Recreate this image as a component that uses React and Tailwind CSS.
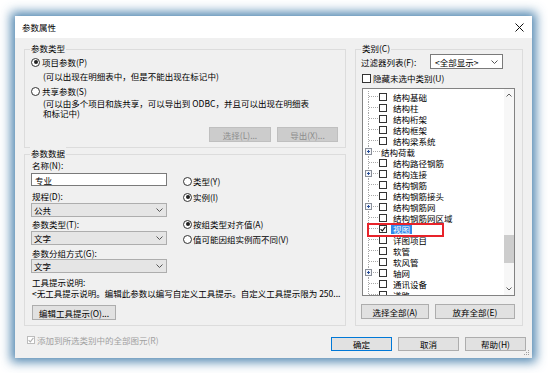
import React from "react";

function Radio({ checked }) {
  return (
    <span className="w-[9px] h-[9px] rounded-full border border-[#333333] bg-white flex items-center justify-center shrink-0">
      {checked && <span className="w-[4px] h-[4px] rounded-full bg-[#222222]" />}
    </span>
  );
}

function Check({ checked, disabled }) {
  return (
    <span
      className={`w-[8px] h-[8px] border bg-white flex items-center justify-center shrink-0 ${
        disabled ? "border-[#bcbcbc]" : "border-[#333333]"
      }`}
    >
      {checked && (
        <svg width="6" height="6" viewBox="0 0 6 6">
          <path d="M0.6 3.2 L2.3 4.9 L5.4 0.9" fill="none" stroke={disabled ? "#b0b0b0" : "#111"} strokeWidth="1.1" />
        </svg>
      )}
    </span>
  );
}

function Chevron() {
  return (
    <svg width="7" height="4" viewBox="0 0 7 4" className="shrink-0">
      <path d="M0.5 0.5 L3.5 3.5 L6.5 0.5" fill="none" stroke="#555" strokeWidth="1" />
    </svg>
  );
}

function Select({ children, className = "" }) {
  return (
    <div className={`h-[14px] bg-[#e5e5e5] border border-[#adadad] flex items-center justify-between pl-[2px] pr-[3px] ${className}`}>
      <span>{children}</span>
      <Chevron />
    </div>
  );
}

function Btn({ children, className = "" }) {
  return (
    <div className={`h-[15px] bg-[#e1e1e1] border border-[#adadad] flex items-center justify-center ${className}`}>
      {children}
    </div>
  );
}

function Group({ label, className = "", children }) {
  return (
    <div className={`relative border border-[#dcdcdc] ${className}`}>
      <span className="absolute -top-[8px] left-[5px] bg-[#f0f0f0] px-[1px] leading-[12px]">{label}</span>
      {children}
    </div>
  );
}

function TreeRow({ text, plus, cb = true, checked, selected, marked }) {
  const w = cb ? 16 : 18;
  return (
    <div className="relative flex items-center h-[11px] whitespace-nowrap">
      <svg width={w} height="11" viewBox={`0 0 ${w} 11`} className="shrink-0">
        <line x1="5.5" y1="0" x2="5.5" y2="11" stroke="#a8a8a8" strokeDasharray="1 1" />
        <line x1="6" y1="5.5" x2={w} y2="5.5" stroke="#a8a8a8" strokeDasharray="1 1" />
        {plus && (
          <g>
            <rect x="2.5" y="2.5" width="6" height="6" fill="#f4f6fa" stroke="#8a8f99" />
            <path d="M4 5.5 H7 M5.5 4 V7" stroke="#2a4f9a" strokeWidth="1" />
          </g>
        )}
      </svg>
      {cb && <Check checked={checked} />}
      {selected ? (
        <span className="ml-[4px] px-[2px] bg-[#3388ea] text-white leading-[10px]">{text}</span>
      ) : (
        <span className={cb ? "ml-[6px]" : "ml-0"}>{text}</span>
      )}
      {marked && <span className="absolute left-[4px] top-0 w-[77px] h-[14px] border-2 border-[#e8232a] z-10" />}
    </div>
  );
}

const rows = [
  { t: "结构基础" },
  { t: "结构柱" },
  { t: "结构桁架" },
  { t: "结构框架" },
  { t: "结构梁系统" },
  { t: "结构荷载", plus: true, cb: false },
  { t: "结构路径钢筋" },
  { t: "结构连接", plus: true },
  { t: "结构钢筋" },
  { t: "结构钢筋接头" },
  { t: "结构钢筋网", plus: true },
  { t: "结构钢筋网区域" },
  { t: "视图", checked: true, selected: true, marked: true },
  { t: "详图项目" },
  { t: "软管" },
  { t: "软风管" },
  { t: "轴网", plus: true },
  { t: "通讯设备" },
  { t: "道路" },
];

export default function App() {
  return (
    <div className="w-[548px] h-[373px] bg-white pt-[16px] pl-[15px] font-['Noto_Sans_CJK_SC','Noto_Sans',sans-serif] text-[8.5px] leading-[12px] text-black overflow-hidden">
      <div className="relative w-[517px] h-[342px] bg-[#f0f0f0] flex flex-col shadow-[0_0_10px_4px_rgba(45,110,160,0.82)]">
        {/* title bar */}
        <div className="h-[22px] bg-white flex items-center justify-between pl-[7px] pr-[8px] shrink-0">
          <span>参数属性</span>
          <svg width="9" height="9" viewBox="0 0 9 9">
            <path d="M0.5 0.5 L8.5 8.5 M8.5 0.5 L0.5 8.5" stroke="#111" strokeWidth="1" />
          </svg>
        </div>

        <div className="flex gap-[9px] px-[9px] pt-[11px]">
          <div className="w-[322px] flex flex-col gap-[6px]">
            <Group label="参数类型" className="h-[99px]">
              <div className="pt-[5px] pl-[6px] pr-[7px]">
                <div className="flex items-center h-[14px] gap-[2px]">
                  <Radio checked />
                  <span>项目参数(P)</span>
                </div>
                <div className="h-[14px] flex items-center pl-[12px]">(可以出现在明细表中，但是不能出现在标记中)</div>
                <div className="flex items-center h-[14px] gap-[2px] mt-[1px]">
                  <Radio />
                  <span>共享参数(S)</span>
                </div>
                <div className="pl-[12px] mt-[1px] whitespace-nowrap">
                  <div className="h-[9.5px] leading-[9.5px]">(可以由多个项目和族共享，可以导出到 ODBC，并且可以出现在明细表</div>
                  <div className="h-[9.5px] leading-[9.5px]">和标记中)</div>
                </div>
                <div className="flex justify-end gap-[6px] mt-[9px]">
                  <div className="w-[62px] h-[15px] bg-[#cccccc] border border-[#bfbfbf] text-[#8c8c8c] flex items-center justify-center">选择(L)...</div>
                  <div className="w-[61px] h-[15px] bg-[#cccccc] border border-[#bfbfbf] text-[#8c8c8c] flex items-center justify-center">导出(X)...</div>
                </div>
              </div>
            </Group>

            <Group label="参数数据" className="h-[172px]">
              <div className="pt-[4px] pl-[6px] pr-[6px]">
                <div className="flex">
                  <div className="w-[136px] flex flex-col">
                    <div className="h-[12px] pl-[1px]">名称(N):</div>
                    <div className="mt-[2px] h-[13px] bg-white border border-[#7a7a7a] flex items-center pl-[3px]">专业</div>
                    <div className="mt-[4px] h-[12px] pl-[1px]">规程(D):</div>
                    <Select className="mt-[1px]">公共</Select>
                    <div className="mt-[1px] h-[12px] pl-[1px]">参数类型(T):</div>
                    <Select className="mt-[1px]">文字</Select>
                    <div className="mt-[2px] h-[12px] pl-[1px]">参数分组方式(G):</div>
                    <Select>文字</Select>
                  </div>
                  <div className="ml-[16px] pt-[15px] flex flex-col">
                    <div className="flex items-center h-[14px] gap-[1px]">
                      <Radio />
                      <span>类型(Y)</span>
                    </div>
                    <div className="flex items-center h-[14px] gap-[1px] mt-[2px]">
                      <Radio checked />
                      <span>实例(I)</span>
                    </div>
                    <div className="flex items-center h-[14px] gap-[1px] mt-[13px]">
                      <Radio checked />
                      <span>按组类型对齐值(A)</span>
                    </div>
                    <div className="flex items-center h-[14px] gap-[1px] mt-[1px]">
                      <Radio />
                      <span>值可能因组实例而不同(V)</span>
                    </div>
                  </div>
                </div>
                <div className="mt-[3px] h-[12px] pl-[1px]">工具提示说明:</div>
                <div className="h-[11px] leading-[11px] pl-[1px] whitespace-nowrap">
                  &lt;无工具提示说明。编辑此参数以编写自定义工具提示。自定义工具提示限为 250...
                </div>
                <Btn className="mt-[6px] ml-[1px] w-[84px] h-[14px]">编辑工具提示(O)...</Btn>
              </div>
            </Group>
          </div>

          <Group label="类别(C)" className="w-[168px] h-[277px]">
            <div className="pt-[4px] pl-[5px]">
              <div className="flex items-center h-[15px]">
                <span className="w-[69px] shrink-0">过滤器列表(F):</span>
                <div className="w-[73px] h-[15px] bg-white border border-[#7a7a7a] flex items-center justify-between pl-[4px] pr-[4px]">
                  <span>&lt;全部显示&gt;</span>
                  <Chevron />
                </div>
              </div>
              <div className="flex items-center h-[12px] mt-[3px] pl-[1px] gap-[2px]">
                <span className="w-[9px] h-[9px] border border-[#333333] bg-white shrink-0" />
                <span>隐藏未选中类别(U)</span>
              </div>
              <div className="mt-[4px] ml-[1px] w-[153px] h-[208px] border border-[#828282] bg-white flex">
                <div className="flex-1 h-full overflow-hidden pt-[2px]">
                  {rows.map((r) => (
                    <TreeRow key={r.t} text={r.t} plus={r.plus} cb={r.cb !== false} checked={r.checked} selected={r.selected} marked={r.marked} />
                  ))}
                </div>
                <div className="w-[10px] flex flex-col bg-[#f7f7f7]">
                  <div className="h-[12px] flex items-center justify-center">
                    <svg width="6" height="4" viewBox="0 0 6 4">
                      <path d="M0.5 3.5 L3 1 L5.5 3.5" fill="none" stroke="#606060" strokeWidth="1" />
                    </svg>
                  </div>
                  <div className="flex-1 flex flex-col">
                    <div className="h-[134px]" />
                    <div className="h-[28px] bg-[#cdcdcd]" />
                  </div>
                  <div className="h-[12px] flex items-center justify-center">
                    <svg width="6" height="4" viewBox="0 0 6 4">
                      <path d="M0.5 0.5 L3 3 L5.5 0.5" fill="none" stroke="#606060" strokeWidth="1" />
                    </svg>
                  </div>
                </div>
              </div>
              <div className="flex gap-[6px] mt-[8px]">
                <Btn className="w-[68px]">选择全部(A)</Btn>
                <Btn className="w-[80px]">放弃全部(E)</Btn>
              </div>
            </div>
          </Group>
        </div>

        <div className="flex items-start mt-[11px] pl-[12px] pr-[6px] h-[14px]">
          <div className="flex items-center h-[12px] -mt-[3px] gap-[2px]">
            <Check checked disabled />
            <span className="text-[#a0a0a0]">添加到所选类别中的全部图元(R)</span>
          </div>
          <div className="ml-auto flex gap-[6px]">
            <div className="w-[61px] h-[14px] bg-[#e1e1e1] border border-[#0078d7] flex items-center justify-center">确定</div>
            <div className="w-[61px] h-[14px] bg-[#e1e1e1] border border-[#adadad] flex items-center justify-center">取消</div>
            <div className="w-[61px] h-[14px] bg-[#e1e1e1] border border-[#adadad] flex items-center justify-center">帮助(H)</div>
          </div>
        </div>

        <svg width="7" height="7" viewBox="0 0 7 7" className="absolute right-[2px] bottom-[2px]">
          <rect x="5" y="1" width="1" height="1" fill="#a0a0a0" />
          <rect x="3" y="3" width="1" height="1" fill="#a0a0a0" />
          <rect x="5" y="3" width="1" height="1" fill="#a0a0a0" />
          <rect x="1" y="5" width="1" height="1" fill="#a0a0a0" />
          <rect x="3" y="5" width="1" height="1" fill="#a0a0a0" />
          <rect x="5" y="5" width="1" height="1" fill="#a0a0a0" />
        </svg>
      </div>
    </div>
  );
}
